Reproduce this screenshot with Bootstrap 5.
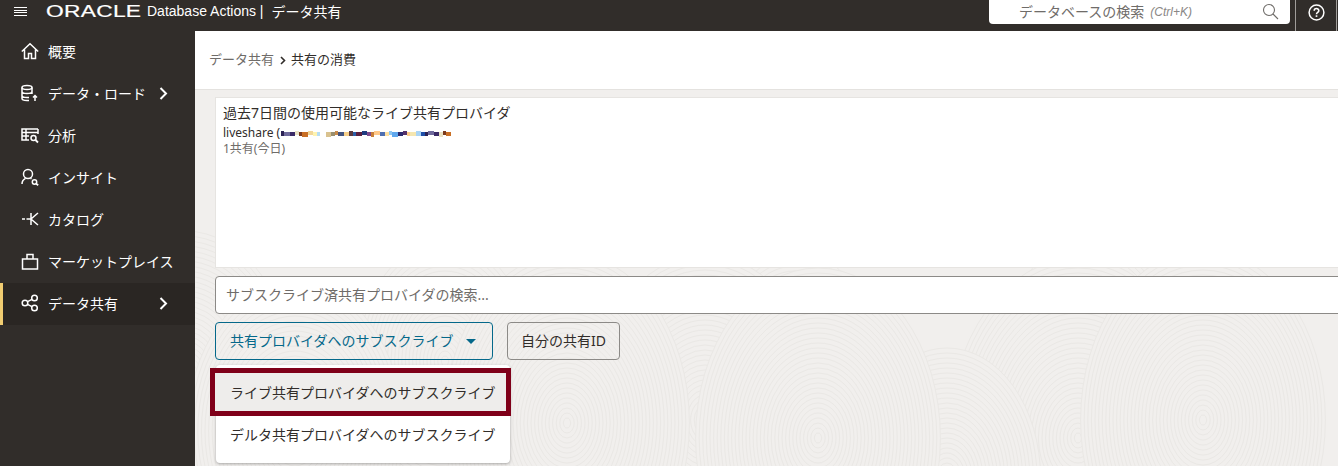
<!doctype html>
<html lang="ja">
<head>
<meta charset="utf-8">
<title>データ共有</title>
<link href="https://cdn.jsdelivr.net/npm/bootstrap@5.3.0/dist/css/bootstrap.min.css" rel="stylesheet">
<style>
html,body{height:466px;overflow:hidden}
body{font-family:"Noto Sans","Noto Sans CJK JP",sans-serif;font-size:14px;color:#312d2a;background:#f1efed}
.top-bar{height:31px;padding-bottom:9px;background:#312d2a;color:#fff}
.burger{margin-left:14px;width:13px;height:9px;background:repeating-linear-gradient(#fff 0 1px,transparent 1px 2.67px)}
.logo-word{margin-left:19px;font-family:"Liberation Sans",sans-serif;font-size:16.500px;line-height:1;letter-spacing:.2px;transform:scaleX(1.38);transform-origin:left;width:95px;white-space:nowrap;-webkit-text-stroke:.2px #fff}
.app-name{font-family:"Liberation Sans",sans-serif;font-size:14px;margin-left:6px;white-space:nowrap}
.app-page{font-size:14px;margin-left:8px}
.global-search{width:301px;height:25px;margin-top:-1px;align-self:flex-start;background:#fff;border-radius:0 0 4px 4px;color:#6f6c69;font-size:14px;padding:0 11px 0 30px}
.global-search i{font-size:12px;color:#8a8785;margin-left:6px;font-family:"Liberation Sans",sans-serif}
.help-cell{width:42px;height:31px;margin-left:5px;margin-right:1px;padding-bottom:7px;align-self:flex-start;border-left:1px solid #a09d9a;border-right:1px solid #a09d9a}
.side-rail{width:195px;height:435px;flex:none;background:#312d2a;color:#fff}
.rail-item{height:42px;padding-left:21px;padding-bottom:2px;position:relative;white-space:nowrap}
.rail-item svg.ri{width:18px;height:18px;flex:none;margin-right:9px;fill:none;stroke:#fff;stroke-width:1.500}
.rail-item.on{background:#2a2623}
.rail-item.on::before{content:"";position:absolute;left:0;top:0;bottom:0;width:3px;background:#f0cc71}
.chev{position:absolute;left:159px;top:14px;width:9px;height:13px;fill:none;stroke:#fff;stroke-width:2}
.work{position:relative;overflow:hidden;height:435px}
.paper{position:absolute;inset:0;width:100%;height:100%}
.crumbs{position:relative;height:59px;background:#fff;border-bottom:1px solid #e4e2df;padding-left:14px;font-size:13px;color:#312d2a}
.crumbs span.dim{color:#6f6c69}
.crumbs svg{width:6px;height:9px;margin:0 5px 0 6px;fill:none;stroke:#312d2a;stroke-width:1.600}
.stack{position:relative;padding:7px 0 0 20px;margin-right:-6px}
.recent{height:171px;background:#fff;border:1px solid #e6e4e1;padding:5px 7px;line-height:1.2}
.recent-title{font-size:14px;height:20px;line-height:20px}
.recent-user{font-size:12px;line-height:14px;margin-top:3px;height:14px;display:flex;align-items:center}
.recent-user svg{width:170px;height:7px;margin-left:1px}
.recent-sub{font-size:12px;color:#6f6c69;line-height:15px;margin-top:1px}
.find-box{height:38px;margin-top:8px;border:1px solid #8c8a87;border-radius:4px;background:#fff;font-size:14px;color:#6f6c69;padding:0 10px 1px}
.btn-row{margin-top:8px;gap:14px}
.act{height:38px;border:1px solid #8c8a87;border-radius:4px;font-size:14px;background:transparent;color:#312d2a;padding:0 13px 2px;--bs-btn-hover-bg:transparent}
.act.primary{width:278px;border-color:#04688a;color:#04688a;padding:0 15px 2px 14px;justify-content:space-between}
.caret-mark{width:0;height:0;border-left:5px solid transparent;border-right:5px solid transparent;border-top:5px solid #04688a;margin-right:1px;margin-top:2px}
.sub-menu{position:absolute;left:21px;top:334px;width:294px;height:98px;background:#fff;border-radius:4px;box-shadow:0 1px 3px rgba(0,0,0,.3);font-size:14px;padding-top:3px;margin:0;--bs-dropdown-border-width:0}
.sub-menu .dropdown-item{padding:0 0 0 14px;color:#312d2a;white-space:nowrap}
.sub-menu .spacer-row{height:48px}
.sub-menu .plain-row{height:38px;padding-bottom:1px}
.mark-box{position:absolute;z-index:1001;left:15px;top:337px;width:301px;height:48px;border:5px solid #7f0019;background:#eeedeb;padding:0 0 0 15px;font-size:14px;color:#312d2a;white-space:nowrap}
</style>
</head>
<body>
<header class="top-bar d-flex align-items-center">
  <div class="burger"></div>
  <div class="logo-word">ORACLE</div>
  <div class="app-name">Database Actions |</div>
  <div class="app-page">データ共有</div>
  <div class="ms-auto global-search d-flex align-items-center">
    <span>データベースの検索</span><i>(Ctrl+K)</i>
    <svg class="ms-auto" width="17" height="17" viewBox="0 0 17 17" fill="none" stroke="#6f6c69" stroke-width="1.100"><circle cx="7" cy="7" r="5.500"/><path d="M11 11l5 5"/></svg>
  </div>
  <div class="help-cell d-flex align-items-center justify-content-center">
    <svg width="17" height="17" viewBox="0 0 17 17" fill="none" stroke="#fff" stroke-width="1.500"><circle cx="8.500" cy="8.500" r="7.400"/><path d="M6.200 6.800c0-3 4.600-3 4.600-.1 0 1.800-2.300 1.700-2.300 3.500" stroke-width="1.600"/><path d="M8.500 11.300v1.600" stroke-width="1.700"/></svg>
  </div>
</header>
<div class="d-flex">
  <nav class="side-rail">
    <div class="rail-item d-flex align-items-center"><svg class="ri" viewBox="0 0 18 18"><path d="M.8 9.500L9 1.800l8.200 7.700M3.500 7.500v9h4v-5h3v5h4v-9"/></svg>概要</div>
    <div class="rail-item d-flex align-items-center"><svg class="ri" viewBox="0 0 18 18"><ellipse cx="6" cy="3.500" rx="5" ry="2"/><path d="M1 3.500v11c0 1.200 2 2 5 2h2M11 3.500V10M1 7.500c0 1.200 2 2 5 2s5-.8 5-2M1 11.500c0 1.200 2 2 5 2h2M14 17v-5.500M12 13.500l2-2 2 2"/></svg>データ・ロード<svg class="chev" viewBox="0 0 9 13"><path d="M1.500 1l5.500 5.500-5.500 5.500"/></svg></div>
    <div class="rail-item d-flex align-items-center"><svg class="ri" viewBox="0 0 18 18"><path d="M17 3H1v11h7M1 6.500h16M5 3v11M1 10h7M17 3v5"/><circle cx="12.500" cy="12" r="2.500"/><path d="M14.500 14l2.500 2.500" stroke-width="1.800"/></svg>分析</div>
    <div class="rail-item d-flex align-items-center"><svg class="ri" viewBox="0 0 18 18"><circle cx="7" cy="6" r="4.500"/><path d="M1 16c0-3 1.700-4.800 3.500-5.700M9.500 10.300l1 .6"/><circle cx="13.500" cy="14" r="2.200"/><path d="M15.200 15.700l2 1.500" stroke-width="1.700"/></svg>インサイト</div>
    <div class="rail-item d-flex align-items-center"><svg class="ri" viewBox="0 0 18 18"><path d="M1 9h3M5.500 9H11M10 3v12M17 3l-7 6 7 6"/></svg>カタログ</div>
    <div class="rail-item d-flex align-items-center"><svg class="ri" viewBox="0 0 18 18"><path d="M1.500 7h15v10h-15zM6 7V2.500h6V7"/></svg>マーケットプレイス</div>
    <div class="rail-item on d-flex align-items-center"><svg class="ri" viewBox="0 0 18 18"><circle cx="4" cy="9" r="2.800"/><circle cx="13.500" cy="4" r="2.800"/><circle cx="13.500" cy="14" r="2.800"/><path d="M6.500 7.700l4.500-2.400M6.500 10.300l4.500 2.400"/></svg>データ共有<svg class="chev" viewBox="0 0 9 13"><path d="M1.500 1l5.500 5.500-5.500 5.500"/></svg></div>
  </nav>
  <main class="work flex-grow-1">
    <svg class="paper" id="paper" viewBox="0 0 1143 435" fill="#f1efed" stroke="#eae8e5" stroke-width="1" aria-hidden="true"></svg>
    <div class="crumbs d-flex align-items-center"><span class="dim">データ共有</span><svg viewBox="0 0 6 9"><path d="M1 1l3.500 3.500L1 8"/></svg><span>共有の消費</span></div>
    <div class="stack">
      <section class="recent">
        <div class="recent-title">過去7日間の使用可能なライブ共有プロバイダ</div>
        <div class="recent-user">liveshare (<svg id="blur" viewBox="0 0 170 7" shape-rendering="crispEdges"></svg></div>
        <div class="recent-sub">1共有(今日)</div>
      </section>
      <div class="find-box d-flex align-items-center">サブスクライブ済共有プロバイダの検索...</div>
      <div class="btn-row d-flex">
        <button type="button" class="btn act primary d-flex align-items-center"><span>共有プロバイダへのサブスクライブ</span><span class="caret-mark"></span></button>
        <button type="button" class="btn act">自分の共有ID</button>
      </div>
    </div>
    <ul class="dropdown-menu show sub-menu list-unstyled">
      <li class="dropdown-item spacer-row">&nbsp;</li>
      <li class="dropdown-item plain-row d-flex align-items-center">デルタ共有プロバイダへのサブスクライブ</li>
    </ul>
    <div class="mark-box d-flex align-items-center">ライブ共有プロバイダへのサブスクライブ</div>
  </main>
</div>
<script>
const NS="http://www.w3.org/2000/svg";
const paper=document.getElementById("paper");
[[372,392,170],[623,407,170],[752,447,130],[1008,389,170],[883,407,180],[510,389,165],[100,400,150],[-10,350,150],[250,330,120],[600,330,110],[900,320,120]].reverse().forEach(function(w){
  for(let r=w[2];r>4;r-=5){
    const e=document.createElementNS(NS,"ellipse");
    e.setAttribute("cx",w[0]);e.setAttribute("cy",w[1]);e.setAttribute("rx",r*.72);e.setAttribute("ry",r);
    paper.appendChild(e);
  }
});
const cols="2b2255 6f6a9c 3a2a66 e9e2c4 7a3a1e c96f25 f2d79a fff3b0 b5ddf5 ffffff d9c28f 9a8f6f c98a4a 44547f f7d08a 5a3a3f 2b5fa8 5a1f3f 1f3b80 7f4a8c c9803a ffc98a 4f6fb0 ffe0a0 8fc7f2 5fa8ee 2b2a6e 54326a ffcc88 f5e6b0 a9d4f5 1f4fa8".split(" ");
const blur=document.getElementById("blur");
let x=0;
for(let i=0;x<170;i++){
  const c=cols[i%cols.length],w=3+(i*7%4),r=document.createElementNS(NS,"rect");
  r.setAttribute("x",x);r.setAttribute("y",i%3==0?1:2);r.setAttribute("width",w);r.setAttribute("height",i%5==0?5:4);r.setAttribute("fill","#"+c);
  blur.appendChild(r);x+=w;
}
</script>
</body>
</html>
